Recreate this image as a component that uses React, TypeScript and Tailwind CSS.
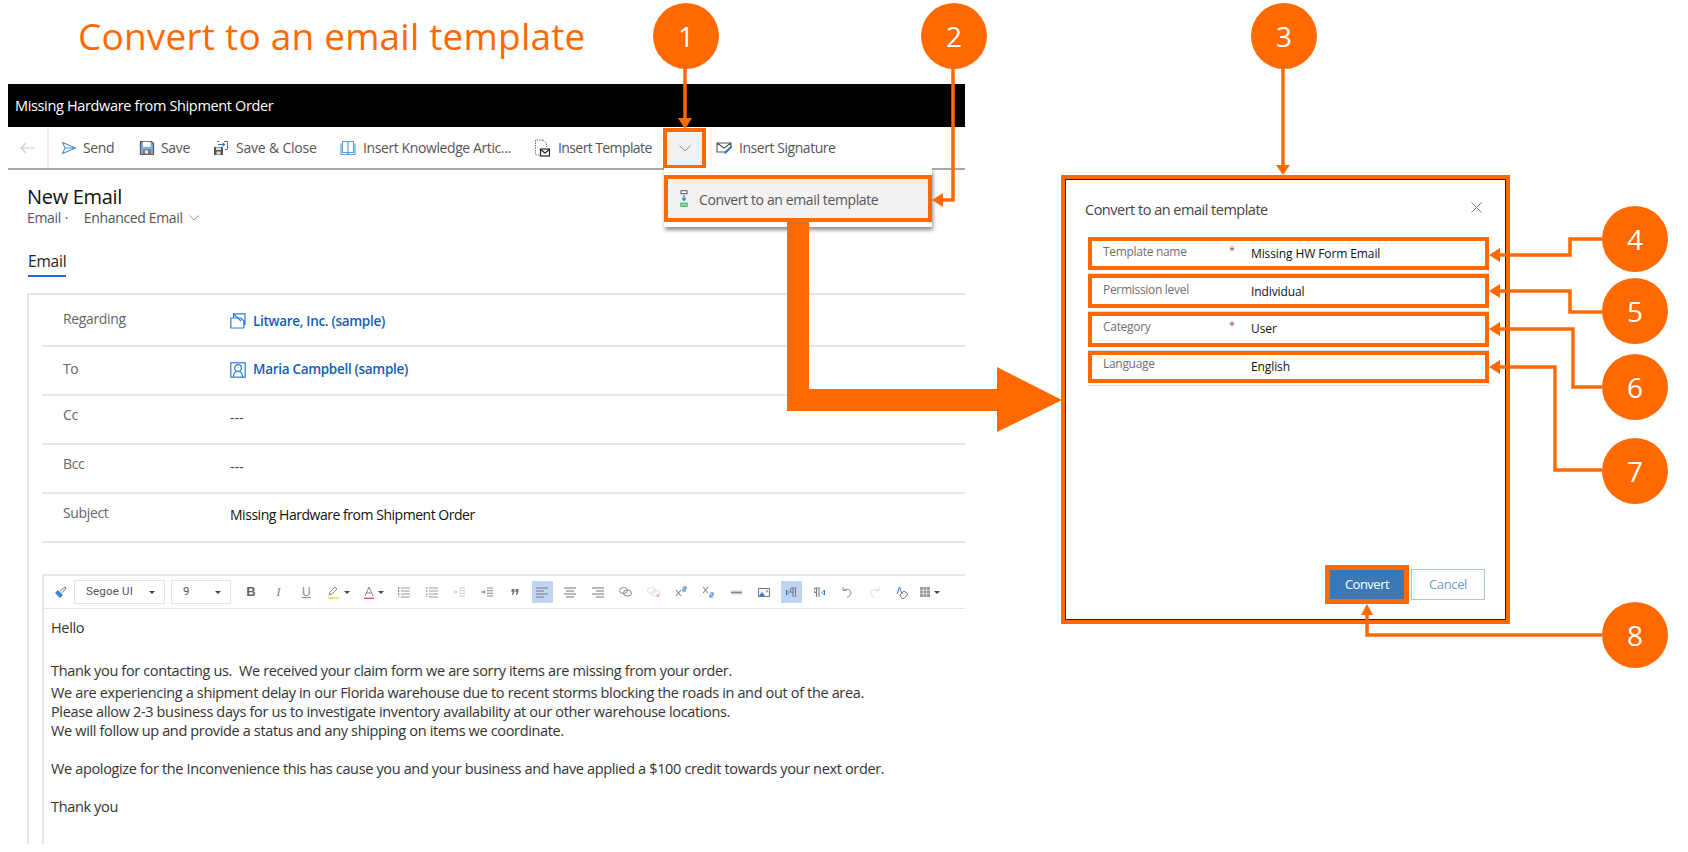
import type { ReactNode } from 'react';

const FONT = "font-['Open_Sans',sans-serif]";

function Svg({ w = 16, h = 16, box = '0 0 16 16', children }: { w?: number; h?: number; box?: string; children: ReactNode }) {
  return (
    <svg width={w} height={h} viewBox={box} fill="none" className="shrink-0">
      {children}
    </svg>
  );
}

const SendIcon = () => (
  <Svg>
    <path d="M1.5 2.5 14.5 8 1.5 13.5 4 8Z M4 8h10" stroke="#4a90d9" strokeWidth="1.1" strokeLinejoin="round" />
  </Svg>
);
const SaveIcon = () => (
  <Svg>
    <path d="M1.5 1.5h11l2 2v11h-13Z" stroke="#555" strokeWidth="1.2" fill="#7fb0de" />
    <rect x="4" y="1.8" width="7.5" height="5" fill="#fff" />
    <rect x="4" y="9.5" width="8" height="5" fill="#777" />
    <rect x="6" y="10.5" width="3" height="3" fill="#eee" />
  </Svg>
);
const SaveCloseIcon = () => (
  <Svg>
    <path d="M1 7h9v8H1Z" fill="#555" />
    <rect x="3" y="7.5" width="5" height="2.5" fill="#ddd" />
    <rect x="3.5" y="11.5" width="4" height="3" fill="#ddd" />
    <path d="M4 1.5h2 M11 1.5h3.5v8H12" stroke="#666" strokeWidth="1" />
    <path d="M5 4.5h6 M9.5 3l2 1.5-2 1.5" stroke="#2b7cd3" strokeWidth="1.2" />
  </Svg>
);
const BookIcon = () => (
  <Svg>
    <path d="M2.5 1.5h4.5l1 1 1-1h4.5v11H9l-1 1-1-1H2.5Z M8 2.5v10.5 M1 3.5v11h14v-11" stroke="#5a9bd8" strokeWidth="1.1" />
  </Svg>
);
const TemplateIcon = () => (
  <Svg h={18} box="0 0 16 18">
    <path d="M9 1H1.5v15H6 M9 1l3.5 3.5V8" stroke="#777" strokeWidth="1" strokeDasharray="1.5 1" />
    <rect x="6.5" y="10" width="9" height="7" fill="#fff" stroke="#222" strokeWidth="1.2" />
    <path d="M6.5 10.5 11 14l4.5-3.5" stroke="#222" strokeWidth="1.2" />
  </Svg>
);
const SignatureIcon = () => (
  <Svg>
    <path d="M10 12H1V3h14v4 M1 3l7 5 7-5" stroke="#555" strokeWidth="1.1" />
    <path d="M8 14.5 9 11.5 15 5.5 16.5 7 10.5 13Z" fill="#2b7cd3" />
  </Svg>
);
const ConvertIcon = () => (
  <Svg w={8} h={17} box="0 0 8 17">
    <rect x="1" y="0.7" width="6" height="3" stroke="#555" strokeWidth="1" fill="#fff" />
    <path d="M4 5v5 M2 8l2 2.5L6 8" stroke="#2b7cd3" strokeWidth="1.2" />
    <rect x="0.7" y="13" width="6.6" height="3.4" fill="#8fd19e" stroke="#3fae5a" strokeWidth="0.8" />
  </Svg>
);
const Chevron = ({ color, w = 12 }: { color: string; w?: number }) => (
  <svg width={w} height={w * 0.55} viewBox="0 0 12 6.6" fill="none" className="shrink-0">
    <path d="M.5.5 6 6l5.5-5.5" stroke={color} strokeWidth="1" />
  </svg>
);
const AccountIcon = () => (
  <Svg>
    <path d="M.8 5h10l3 3v7H.8Z M3.5 5V.8h11.5v11" stroke="#2b7cd3" strokeWidth="1.2" />
    <path d="M3.5 1 11 8" stroke="#2b7cd3" strokeWidth="1.2" />
  </Svg>
);
const ContactIcon = () => (
  <Svg>
    <rect x=".8" y=".8" width="14.4" height="14.4" stroke="#2b7cd3" strokeWidth="1.2" />
    <circle cx="8" cy="6" r="3.4" stroke="#2b7cd3" strokeWidth="1.2" />
    <path d="M3.5 15c0-3 1.5-5 3-5.5 M12.5 15c0-3-1.5-5-3-5.5" stroke="#2b7cd3" strokeWidth="1.2" />
  </Svg>
);

const Caret = () => <span className="ml-[4px] w-0 h-0 border-x-[3px] border-x-transparent border-t-[3px] border-t-[#444] shrink-0" />;

const EDIT_GRAY = '#8a8a8a';
const Lines = ({ kind }: { kind: 'left' | 'center' | 'right' | 'bullets' | 'numbers' }) => {
  const rows = [2, 5, 8, 11];
  return (
    <Svg w={12} h={12} box="0 0 12 12">
      {rows.map((y, i) => {
        if (kind === 'left') return <path key={y} d={`M0 ${y}h${i % 2 ? 8 : 12}`} stroke={EDIT_GRAY} strokeWidth="1.2" />;
        if (kind === 'center') return <path key={y} d={`M${i % 2 ? 2 : 0} ${y}h${i % 2 ? 8 : 12}`} stroke={EDIT_GRAY} strokeWidth="1.2" />;
        if (kind === 'right') return <path key={y} d={`M${i % 2 ? 4 : 0} ${y}h${i % 2 ? 8 : 12}`} stroke={EDIT_GRAY} strokeWidth="1.2" />;
        return <path key={y} d={`M3 ${y}h9`} stroke="#aaa" strokeWidth="1.2" />;
      })}
      {kind === 'bullets' && <path d="M.5 1v10" stroke="#888" strokeWidth="1.4" strokeDasharray="2 1" />}
      {kind === 'numbers' && <path d="M.7 1v10" stroke="#7aa7d8" strokeWidth="1.2" strokeDasharray="2 1" />}
    </Svg>
  );
};
const Indent = ({ dark }: { dark?: boolean }) => (
  <Svg w={12} h={10} box="0 0 12 10">
    <path d="M6 1h6 M6 3.7h6 M6 6.3h6 M6 9h6" stroke={dark ? '#888' : '#ccc'} strokeWidth="1" />
    <path d="M0 5h4 M2.5 3.5 4 5 2.5 6.5" stroke={dark ? '#2b7cd3' : '#a9c8ea'} strokeWidth="1" />
  </Svg>
);
const Quote = () => (
  <Svg w={8} h={6} box="0 0 8 6">
    <path d="M.5 0h3v3L2 6H.8l.9-3H.5Z M4.5 0h3v3L6 6H4.8l.9-3H4.5Z" fill="#777" />
  </Svg>
);
const LinkIcon = ({ off }: { off?: boolean }) => (
  <Svg w={13} h={10} box="0 0 13 10">
    <ellipse cx="4.5" cy="3.5" rx="4" ry="3" stroke={off ? '#ddd' : '#888'} />
    <ellipse cx="8.5" cy="6" rx="4" ry="3" stroke={off ? '#ddd' : '#888'} />
    {off && <path d="M9.5 7l3 3 M12.5 7l-3 3" stroke="#e99" />}
  </Svg>
);
const Script = ({ up }: { up?: boolean }) => (
  <Svg w={12} h={12} box="0 0 12 12">
    <path d="M1 4l5 6 M6 4l-5 6" stroke="#888" strokeWidth="1.1" transform={up ? undefined : 'translate(0 -3)'} />
    <path d={up ? 'M8 1h3v2H8v2h3' : 'M8 7h3v2H8v2h3'} stroke="#2b7cd3" strokeWidth="1.1" />
  </Svg>
);
const Strike = () => (
  <Svg w={11} h={5} box="0 0 11 5">
    <path d="M0 2.5h11" stroke="#888" strokeWidth="2" />
    <path d="M0 1h11 M0 4h11" stroke="#ccc" strokeWidth=".8" />
  </Svg>
);
const ImageIcon = () => (
  <Svg w={12} h={9} box="0 0 12 9">
    <rect x=".5" y=".5" width="11" height="8" stroke="#777" fill="#f4f4f4" />
    <path d="M1 8 4 4l3 4Z" fill="#2b7cd3" />
    <circle cx="9" cy="3" r="1" fill="#999" />
  </Svg>
);
const Ltr = () => (
  <Svg w={11} h={11} box="0 0 11 11">
    <path d="M7 1v9 M9.5 1v9 M10.5 1H6.5a2.2 2.2 0 0 0 0 4.5H7" stroke="#777" strokeWidth="1.1" />
    <path d="M.5 3v5L3 5.5Z" stroke="#2b7cd3" />
  </Svg>
);
const Rtl = () => (
  <Svg w={11} h={11} box="0 0 11 11">
    <path d="M2.5 1v9 M5 1v9 M6 1H2a2.2 2.2 0 0 0 0 4.500h.5" stroke="#777" strokeWidth="1.1" />
    <path d="M10.5 3v5L8 5.5Z" stroke="#2b7cd3" />
  </Svg>
);
const Undo = () => (
  <Svg w={10} h={12} box="0 0 10 12">
    <path d="M1 1v3.5h3.5 M1.5 4.3C5 2 9 3.5 9 7c0 2-1.5 3.5-4 4.500" stroke="#888" />
  </Svg>
);
const Redo = () => (
  <Svg w={10} h={12} box="0 0 10 12">
    <path d="M9 1v3.5H5.500 M8.500 4.300C5 2 1 3.500 1 7c0 2 1.500 3.500 4 4.500" stroke="#ddd" />
  </Svg>
);
const ClearFormat = () => (
  <Svg w={13} h={13} box="0 0 13 13">
    <path d="M1 8l2.500-7L6 8" stroke="#2b7cd3" />
    <path d="M4 9l4-4 4 3-4 4.500H6Z" stroke="#777" />
  </Svg>
);
const TableIcon = () => (
  <Svg w={10} h={10} box="0 0 10 10">
    <path d="M0 0h10v10H0Z" fill="#999" />
    <path d="M3.300 0v10 M6.600 0v10 M0 3.300h10 M0 6.600h10" stroke="#fff" strokeWidth=".6" />
  </Svg>
);
const Brush = () => (
  <Svg w={13} h={13} box="0 0 13 13">
    <path d="M1 7l5 5 3-3-5-5Z" fill="#3d85d0" />
    <path d="M6 5l5-4 1 1-4 5" stroke="#777" />
  </Svg>
);

const Tool = ({ active, children }: { active?: boolean; children: ReactNode }) => (
  <div className="w-[27.7px] h-[22px] flex items-center justify-center shrink-0">
    <div className={`w-[21px] h-[22px] flex items-center justify-center ${active ? 'bg-[#bdd4f2]' : ''}`}>{children}</div>
  </div>
);

const FontSelect = ({ label, width }: { label: string; width: string }) => (
  <div className={`${width} h-[24px] border border-[#e3e3e3] flex items-center justify-between pl-[11px] pr-[9px] text-[11.5px] text-[#555] font-['Roboto',sans-serif] tracking-[0.2px]`}>
    <span>{label}</span>
    <span className="w-0 h-0 border-x-[3px] border-x-transparent border-t-[3px] border-t-[#444]" />
  </div>
);

const EditorToolbar = () => (
  <div className="h-[33px] border-b border-[#e3e3e3] flex items-center pl-[10px]">
    <div className="w-[20px] flex justify-start"><Brush /></div>
    <FontSelect label="Segoe UI" width="w-[91px]" />
    <div className="w-[6px]" />
    <FontSelect label="9" width="w-[60px]" />
    <div className="w-[6px]" />
    <Tool><span className="text-[13px] font-bold text-[#666] font-['Liberation_Sans',sans-serif]">B</span></Tool>
    <Tool><span className="text-[13px] italic text-[#888] font-['Liberation_Serif',serif]">I</span></Tool>
    <Tool><span className="text-[12px] underline text-[#888] font-['Liberation_Sans',sans-serif]">U</span></Tool>
    <div className="w-[37px] flex items-center justify-center shrink-0">
      <Svg w={12} h={13} box="0 0 12 13">
        <path d="M1 9l1-3 5-5 2 2-5 5Z" stroke="#888" />
        <path d="M0 12h11" stroke="#f3d75c" strokeWidth="1.6" />
      </Svg>
      <Caret />
    </div>
    <div className="w-[33px] flex items-center justify-center shrink-0">
      <Svg w={10} h={13} box="0 0 10 13">
        <path d="M1 10l4-9 4 9 M2.5 7h5" stroke="#888" />
        <path d="M0 12.3h10" stroke="#e55" strokeWidth="1.4" />
      </Svg>
      <Caret />
    </div>
    <Tool><Lines kind="bullets" /></Tool>
    <Tool><Lines kind="numbers" /></Tool>
    <Tool><Indent /></Tool>
    <Tool><Indent dark /></Tool>
    <Tool><Quote /></Tool>
    <Tool active><Lines kind="left" /></Tool>
    <Tool><Lines kind="center" /></Tool>
    <Tool><Lines kind="right" /></Tool>
    <Tool><LinkIcon /></Tool>
    <Tool><LinkIcon off /></Tool>
    <Tool><Script up /></Tool>
    <Tool><Script /></Tool>
    <Tool><Strike /></Tool>
    <Tool><ImageIcon /></Tool>
    <Tool active><Ltr /></Tool>
    <Tool><Rtl /></Tool>
    <Tool><Undo /></Tool>
    <Tool><Redo /></Tool>
    <Tool><ClearFormat /></Tool>
    <div className="w-[27.7px] flex items-center justify-center shrink-0"><TableIcon /><Caret /></div>
  </div>
);

const CommandItem = ({ icon, label, width, gap = 'gap-[6px]', tracking = 'tracking-[-0.35px]' }: { icon: ReactNode; label: string; width: string; gap?: string; tracking?: string }) => (
  <div className={`${width} flex items-center ${gap} text-[14px] ${tracking} text-[#555] whitespace-nowrap shrink-0`}>
    {icon}
    <span>{label}</span>
  </div>
);

const FormRow = ({ label, height = 'h-[49px]', labelShift, children }: { label: string; height?: string; labelShift: string; children: ReactNode }) => (
  <div className={`${height} border-b-2 border-[#e6e6e6] ml-[13px] flex items-center pl-[21px]`}>
    <div className={`w-[167px] ${labelShift} text-[14px] tracking-[-0.35px] text-[#666]`}>{label}</div>
    {children}
  </div>
);

const LinkValue = ({ icon, label, shift }: { icon: ReactNode; label: string; shift: string }) => (
  <div className={`flex items-center gap-[7px] ${shift}`}>
    {icon}
    <span className="text-[13.5px] font-semibold tracking-[-0.3px] text-[#1160b7] whitespace-nowrap">{label}</span>
  </div>
);

const BODY_LINE = 'text-[14.5px] leading-[19px] tracking-[-0.35px] text-[#333] whitespace-nowrap';

const FIELDS = [
  { label: 'Template name', value: 'Missing HW Form Email', required: true, box: 'h-[33px]', wrap: 'h-[37px]', labelShift: '-mt-[3px]', valueShift: 'mt-0' },
  { label: 'Permission level', value: 'Individual', required: false, box: 'h-[34px]', wrap: 'h-[38px]', labelShift: '-mt-[3px]', valueShift: 'mt-[2px]' },
  { label: 'Category', value: 'User', required: true, box: 'h-[35px]', wrap: 'h-[39px]', labelShift: '-mt-[5px]', valueShift: '-mt-[2px]' },
  { label: 'Language', value: 'English', required: false, box: 'h-[32px]', wrap: 'h-[35px]', labelShift: '-mt-[6px]', valueShift: 'mt-0' },
];

const Bubble = ({ n, pos }: { n: number; pos: string }) => (
  <div className={`absolute ${pos} w-[66px] h-[66px] rounded-full bg-[#ff6900] text-white text-[28px] flex items-center justify-center`}>{n}</div>
);

const ORANGE = '#ff6900';
const Callouts = () => (
  <>
    <svg className="absolute inset-0 pointer-events-none" width="1688" height="852" fill="none">
      <g stroke={ORANGE} strokeWidth="3.5">
        <path d="M685 66V120" />
        <path d="M953 66V200H942" />
        <path d="M1283 66V166" />
        <path d="M1602 239H1570V255H1498" />
        <path d="M1498 291H1570V312H1602" />
        <path d="M1498 329H1573V387H1602" />
        <path d="M1498 367H1555V470H1602" />
        <path d="M1602 635H1367V612" />
      </g>
      <g fill={ORANGE}>
        <path d="M678 118h14l-7 11Z" />
        <path d="M943 193v14l-11-7Z" />
        <path d="M1276 165h14l-7 10Z" />
        <path d="M1500 248v14l-11-7Z" />
        <path d="M1500 284v14l-11-7Z" />
        <path d="M1500 322v14l-11-7Z" />
        <path d="M1500 360v14l-11-7Z" />
        <path d="M1361 615h12l-6-11Z" />
        <path d="M787 220h22V389h188V367l65 33-65 32V411H787Z" />
      </g>
    </svg>
    <Bubble n={1} pos="left-[653px] top-[3px]" />
    <Bubble n={2} pos="left-[921px] top-[3px]" />
    <Bubble n={3} pos="left-[1251px] top-[3px]" />
    <Bubble n={4} pos="left-[1602px] top-[206px]" />
    <Bubble n={5} pos="left-[1602px] top-[278px]" />
    <Bubble n={6} pos="left-[1602px] top-[354px]" />
    <Bubble n={7} pos="left-[1602px] top-[438px]" />
    <Bubble n={8} pos="left-[1602px] top-[602px]" />
  </>
);

export default function App() {
  return (
    <div className={`relative w-[1688px] h-[852px] overflow-hidden bg-white flex pl-[8px] ${FONT}`}>
      {/* email form */}
      <div className="w-[957px] shrink-0 flex flex-col">
        <div className="h-[84px] pl-[70px] pt-[10px] text-[37px] leading-[52px] tracking-[0.2px] text-[#ff6900] whitespace-nowrap">Convert to an email template</div>
        <div className="h-[43px] bg-black flex items-center pl-[7px] text-[14.5px] tracking-[-0.35px] text-white">Missing Hardware from Shipment Order</div>

        <div className="relative h-[43px] border-b-2 border-[#a8a8a8] flex items-center">
          <div className="w-[41px] h-full flex items-center justify-center shrink-0 border-r-2 border-[#eee]">
            <svg width="16" height="12" viewBox="0 0 16 12" fill="none">
              <path d="M15 6H1 M6 1 1 6l5 5" stroke="#ccc" strokeWidth="1.1" />
            </svg>
          </div>
          <div className="w-[12px] shrink-0" />
          <CommandItem width="w-[78px]" icon={<SendIcon />} label="Send" />
          <CommandItem width="w-[74px]" icon={<SaveIcon />} label="Save" />
          <CommandItem width="w-[127px]" gap="gap-[7px]" tracking="tracking-[-0.2px]" icon={<SaveCloseIcon />} label="Save & Close" />
          <CommandItem width="w-[194px]" gap="gap-[7px]" tracking="tracking-[-0.4px]" icon={<BookIcon />} label="Insert Knowledge Artic..." />
          <CommandItem width="w-[129px]" gap="gap-[8px]" tracking="tracking-[-0.6px]" icon={<TemplateIcon />} label="Insert Template" />
          <div className="w-[43px] h-[41px] -mb-[2px] border-4 border-[#ff6900] bg-[#f3f2f1] flex items-center justify-center shrink-0">
            <Chevron color="#5a93cf" />
          </div>
          <div className="w-[10px] shrink-0" />
          <CommandItem width="w-[130px]" gap="gap-[7px]" tracking="tracking-[-0.45px]" icon={<SignatureIcon />} label="Insert Signature" />

          <div className="absolute left-[656px] top-[41px] w-[268px] h-[59px] bg-white shadow-[1px_3px_4px_rgba(0,0,0,0.45)] pt-[7px]">
            <div className="h-[47px] border-4 border-[#ff6900] bg-[#f3f2f1] flex items-center pl-[12px] gap-[11px] text-[14px] tracking-[-0.38px] text-[#555] whitespace-nowrap">
              <ConvertIcon />
              <span className="mt-[2px]">Convert to an email template</span>
            </div>
          </div>
        </div>

        <div className="pl-[19px] pt-[14px] h-[123px]">
          <div className="text-[20px] leading-[25px] tracking-[-0.3px] text-[#111]">New Email</div>
          <div className="flex items-center text-[14px] leading-[18px] tracking-[-0.35px] text-[#555]">
            <span>Email</span>
            <span className="ml-[4px] w-[19px]">·</span>
            <span>Enhanced Email</span>
            <span className="ml-[6px]"><Chevron color="#888" w={10} /></span>
          </div>
          <div className="mt-[24px] ml-[1px] w-fit">
            <div className="text-[15.5px] leading-[20px] tracking-[-0.2px] text-[#222] pb-[4px]">Email</div>
            <div className="h-[2px] bg-[#2266e3]" />
          </div>
        </div>

        <div className="flex-1 mb-[8px] ml-[19px] border-l-2 border-t-2 border-[#e6e6e6]">
          <FormRow label="Regarding" height="h-[52px]" labelShift="-mt-[4px]">
            <LinkValue icon={<AccountIcon />} label="Litware, Inc. (sample)" shift="mt-[2px]" />
          </FormRow>
          <FormRow label="To" labelShift="-mt-[4px]">
            <LinkValue icon={<ContactIcon />} label="Maria Campbell (sample)" shift="-mt-[2px]" />
          </FormRow>
          <FormRow label="Cc" labelShift="-mt-[11px]"><span className="-mt-[4px] text-[14px] text-[#444]">---</span></FormRow>
          <FormRow label="Bcc" labelShift="-mt-[11px]"><span className="-mt-[4px] text-[14px] text-[#444]">---</span></FormRow>
          <FormRow label="Subject" labelShift="-mt-[11px]">
            <span className="-mt-[6px] text-[14px] tracking-[-0.47px] text-[#111] whitespace-nowrap">Missing Hardware from Shipment Order</span>
          </FormRow>

          <div className="mt-[31px] ml-[13px] h-[270px] border-l-2 border-t-2 border-[#e6e6e6]">
            <EditorToolbar />
            <div className="pl-[7px] pt-[9px]">
              <p className={BODY_LINE}>Hello</p>
              <p className={`${BODY_LINE} mt-[24px]`}>Thank you for contacting us.&nbsp; We received your claim form we are sorry items are missing from your order.</p>
              <p className={`${BODY_LINE} mt-[3px]`}>We are experiencing a shipment delay in our Florida warehouse due to recent storms blocking the roads in and out of the area.</p>
              <p className={BODY_LINE}>Please allow 2-3 business days for us to investigate inventory availability at our other warehouse locations.</p>
              <p className={BODY_LINE}>We will follow up and provide a status and any shipping on items we coordinate.</p>
              <p className={`${BODY_LINE} mt-[19px]`}>We apologize for the Inconvenience this has cause you and your business and have applied a $100 credit towards your next order.</p>
              <p className={`${BODY_LINE} mt-[19px]`}>Thank you</p>
            </div>
          </div>
        </div>
      </div>

      {/* dialog */}
      <div className="ml-[96px] mt-[175px] w-[449px] h-[449px] shrink-0 border-4 border-[#ff6900]">
        <div className="h-full border border-[#222] bg-white flex flex-col pl-[22px] pr-[16px]">
          <div className="h-[57px] flex items-center justify-between pr-[7px]">
            <span className="-ml-[3px] mt-[2px] text-[14.5px] tracking-[-0.5px] text-[#444] whitespace-nowrap">Convert to an email template</span>
            <svg width="11" height="11" viewBox="0 0 11 11" fill="none" className="-mt-[2px]">
              <path d="M.5.5l10 10 M10.5.5l-10 10" stroke="#777" />
            </svg>
          </div>
          {FIELDS.map((f) => (
            <div key={f.label} className={`${f.wrap} border-b border-[#dedede]`}>
              <div className={`${f.box} border-4 border-[#ff6900] flex items-center pl-[11px] relative`}>
                <span className={`w-[148px] ${f.labelShift} text-[12px] tracking-[-0.3px] text-[#707070] whitespace-nowrap`}>{f.label}</span>
                <span className={`${f.valueShift} text-[12px] font-medium tracking-[-0.1px] text-[#111] whitespace-nowrap`}>{f.value}</span>
                {f.required && <span className="absolute left-[137px] top-[1px] text-[11px] text-[#b04a4a]">*</span>}
              </div>
            </div>
          ))}
          <div className="mt-auto mb-[15px] flex items-center justify-end gap-[2px] pr-[4px]">
            <div className="w-[84px] h-[39px] border-[5px] border-[#ff6900] bg-[#3b78b8] flex items-center justify-center text-[13px] tracking-[-0.5px] text-white">Convert</div>
            <div className="w-[74px] h-[31px] border border-[#a9c4e4] bg-white flex items-center justify-center text-[13px] tracking-[-0.35px] text-[#6a9bd0]">Cancel</div>
          </div>
        </div>
      </div>

      <Callouts />
    </div>
  );
}
